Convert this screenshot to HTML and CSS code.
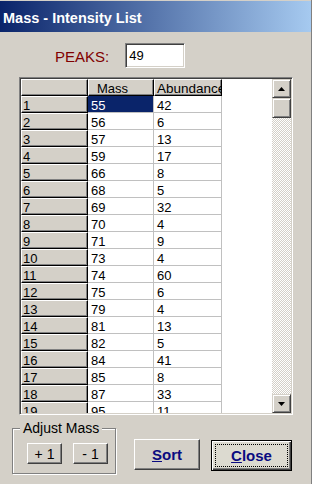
FILE: index.html
```html
<!DOCTYPE html>
<html lang="en">
<head>
  <meta charset="UTF-8" />
  <meta name="viewport" content="width=device-width, initial-scale=1.0" />
  <title>Mass - Intensity List</title>
  <link rel="stylesheet" href="styles.css">
</head>
<body>
  <div class="window">
    <div class="titlebar">Mass - Intensity List</div>

    <div class="peaks">
      <span class="peaks-label">PEAKS:</span>
      <div class="peaks-input">49</div>
    </div>

    <div class="grid">
      <div class="cells">
        <div class="row">
          <div class="cell fixed rowhead"></div>
          <div class="cell fixed mass head-mass">Mass</div>
          <div class="cell fixed abund">Abundance</div>
        </div>
        <div class="row"><div class="cell fixed rowhead">1</div><div class="cell mass selected">55</div><div class="cell abund">42</div></div>
        <div class="row"><div class="cell fixed rowhead">2</div><div class="cell mass">56</div><div class="cell abund">6</div></div>
        <div class="row"><div class="cell fixed rowhead">3</div><div class="cell mass">57</div><div class="cell abund">13</div></div>
        <div class="row"><div class="cell fixed rowhead">4</div><div class="cell mass">59</div><div class="cell abund">17</div></div>
        <div class="row"><div class="cell fixed rowhead">5</div><div class="cell mass">66</div><div class="cell abund">8</div></div>
        <div class="row"><div class="cell fixed rowhead">6</div><div class="cell mass">68</div><div class="cell abund">5</div></div>
        <div class="row"><div class="cell fixed rowhead">7</div><div class="cell mass">69</div><div class="cell abund">32</div></div>
        <div class="row"><div class="cell fixed rowhead">8</div><div class="cell mass">70</div><div class="cell abund">4</div></div>
        <div class="row"><div class="cell fixed rowhead">9</div><div class="cell mass">71</div><div class="cell abund">9</div></div>
        <div class="row"><div class="cell fixed rowhead">10</div><div class="cell mass">73</div><div class="cell abund">4</div></div>
        <div class="row"><div class="cell fixed rowhead">11</div><div class="cell mass">74</div><div class="cell abund">60</div></div>
        <div class="row"><div class="cell fixed rowhead">12</div><div class="cell mass">75</div><div class="cell abund">6</div></div>
        <div class="row"><div class="cell fixed rowhead">13</div><div class="cell mass">79</div><div class="cell abund">4</div></div>
        <div class="row"><div class="cell fixed rowhead">14</div><div class="cell mass">81</div><div class="cell abund">13</div></div>
        <div class="row"><div class="cell fixed rowhead">15</div><div class="cell mass">82</div><div class="cell abund">5</div></div>
        <div class="row"><div class="cell fixed rowhead">16</div><div class="cell mass">84</div><div class="cell abund">41</div></div>
        <div class="row"><div class="cell fixed rowhead">17</div><div class="cell mass">85</div><div class="cell abund">8</div></div>
        <div class="row"><div class="cell fixed rowhead">18</div><div class="cell mass">87</div><div class="cell abund">33</div></div>
        <div class="row"><div class="cell fixed rowhead">19</div><div class="cell mass">95</div><div class="cell abund">11</div></div>
      </div>
      <div class="scrollbar">
        <div class="sb-btn">
          <svg width="7" height="4" viewBox="0 0 7 4"><polygon points="3.5,0 7,4 0,4" fill="#000"/></svg>
        </div>
        <div class="sb-btn sb-thumb"></div>
        <div class="sb-track"></div>
        <div class="sb-btn">
          <svg width="7" height="4" viewBox="0 0 7 4"><polygon points="0,0 7,0 3.5,4" fill="#000"/></svg>
        </div>
      </div>
    </div>

    <div class="bottom">
      <div class="group">
        <span class="group-label">Adjust Mass</span>
        <div class="group-buttons">
          <div class="btn small">+ 1</div>
          <div class="btn small">- 1</div>
        </div>
      </div>
      <div class="btn action sort"><u>S</u>ort</div>
      <div class="btn action close default"><span class="focus"><u>C</u>lose</span></div>
    </div>
  </div>
</body>
</html>
```

FILE: styles.css
```css
body {
  margin: 0;
  font-family: "Liberation Sans", Arial, sans-serif;
}
.window {
  width: 312px;
  height: 484px;
  box-sizing: border-box;
  background-color: #d4d0c8;
  border-right: 1px solid #808080;
  overflow: hidden;
}
.titlebar {
  height: 32px;
  box-sizing: border-box;
  padding: 9px 0 0 3px;
  background: linear-gradient(to right, #0a246a, #a6caf0);
  border-top: 1px solid #d4d0c8;
  color: #fff;
  font-weight: bold;
  font-size: 14.5px;
  line-height: 16px;
}
.peaks {
  display: flex;
  align-items: center;
  margin-top: 11px;
  padding-left: 55px;
  gap: 16px;
}
.peaks-label {
  color: #800000;
  font-size: 15px;
  padding-top: 1px;
}
.peaks-input {
  width: 60px;
  height: 25px;
  box-sizing: border-box;
  background: #fff;
  border: 1px solid;
  border-color: #808080 #fff #fff #808080;
  box-shadow: inset 1px 1px 0 #404040, inset -1px -1px 0 #d4d0c8;
  font-size: 13px;
  line-height: 14px;
  padding: 5px 0 0 3px;
}
.grid {
  display: flex;
  margin: 9px 0 0 19px;
  width: 274px;
  height: 338px;
  box-sizing: border-box;
  border: 1px solid;
  border-color: #808080 #fff #fff #808080;
  box-shadow: inset 1px 1px 0 #404040, inset -1px -1px 0 #d4d0c8;
  padding: 1px;
}
.cells {
  flex: 1;
  background: #fff;
  overflow: hidden;
}
.row {
  display: flex;
  height: 17px;
}
.cell {
  box-sizing: border-box;
  height: 17px;
  font-size: 13px;
  line-height: 13px;
  padding: 3px 0 0 3px;
  border-right: 1px solid #c0c0c0;
  border-bottom: 1px solid #c0c0c0;
  white-space: nowrap;
  overflow: hidden;
}
.cell.fixed {
  background: #d4d0c8;
  border-top: 1px solid #fff;
  border-left: 1px solid #fff;
  border-right: 1px solid #000;
  border-bottom: 1px solid #000;
  box-shadow: inset -1px -1px 0 #808080;
  padding: 2px 0 0 1px;
}
.rowhead {
  width: 67px;
}
.mass {
  width: 66px;
}
.abund {
  width: 68px;
}
.cell.fixed.abund {
  padding-left: 2px;
  font-size: 13.5px;
}
.cell.fixed.head-mass {
  padding-left: 8px;
}
.selected {
  background: #0a246a;
  color: #fff;
}
.scrollbar {
  width: 19px;
  display: flex;
  flex-direction: column;
}
.sb-btn {
  height: 19px;
  box-sizing: border-box;
  display: flex;
  align-items: center;
  justify-content: center;
  background: #d4d0c8;
  border: 1px solid;
  border-color: #d4d0c8 #404040 #404040 #d4d0c8;
  box-shadow: inset 1px 1px 0 #fff, inset -1px -1px 0 #808080;
}
.sb-thumb {
  height: 20px;
}
.sb-track {
  flex: 1;
  background: repeating-conic-gradient(#d4d0c8 0 25%, #fff 0 50%) 0 0 / 2px 2px;
}
.bottom {
  display: flex;
  align-items: flex-start;
  margin-top: 6px;
}
.group {
  margin-left: 12px;
  width: 104px;
  height: 53px;
  box-sizing: border-box;
  display: flex;
  flex-direction: column;
}
.group-label {
  font-size: 14px;
  line-height: 14px;
  margin-left: 8px;
  padding: 0 3px;
  align-self: flex-start;
  position: relative;
  z-index: 1;
  background: #d4d0c8;
}
.group-buttons {
  margin-top: -7px;
  flex: 1;
  display: flex;
  gap: 11px;
  padding: 14px 0 0 14px;
  border: 1px solid #808080;
  box-shadow: 1px 1px 0 #fff, inset 1px 1px 0 #fff;
}
.btn {
  box-sizing: border-box;
  display: flex;
  align-items: center;
  justify-content: center;
  background: #d4d0c8;
  border: 1px solid;
  border-color: #fff #404040 #404040 #fff;
  box-shadow: inset -1px -1px 0 #808080;
}
.btn.small {
  width: 35px;
  height: 21px;
  font-size: 14px;
}
.btn.action {
  height: 31px;
  color: #0a0a80;
  font-weight: bold;
  font-size: 15px;
}
.sort {
  width: 66px;
  margin: 18px 0 0 18px;
}
.close {
  width: 81px;
  margin: 19px 0 0 11px;
  border: 1px solid #000;
  box-shadow: inset 1px 1px 0 #fff, inset -1px -1px 0 #404040, inset -2px -2px 0 #808080;
  background: #dcdad0;
}
.focus {
  display: flex;
  align-items: center;
  justify-content: center;
  width: 71px;
  height: 21px;
  border: 1px dotted #000;
}
```
